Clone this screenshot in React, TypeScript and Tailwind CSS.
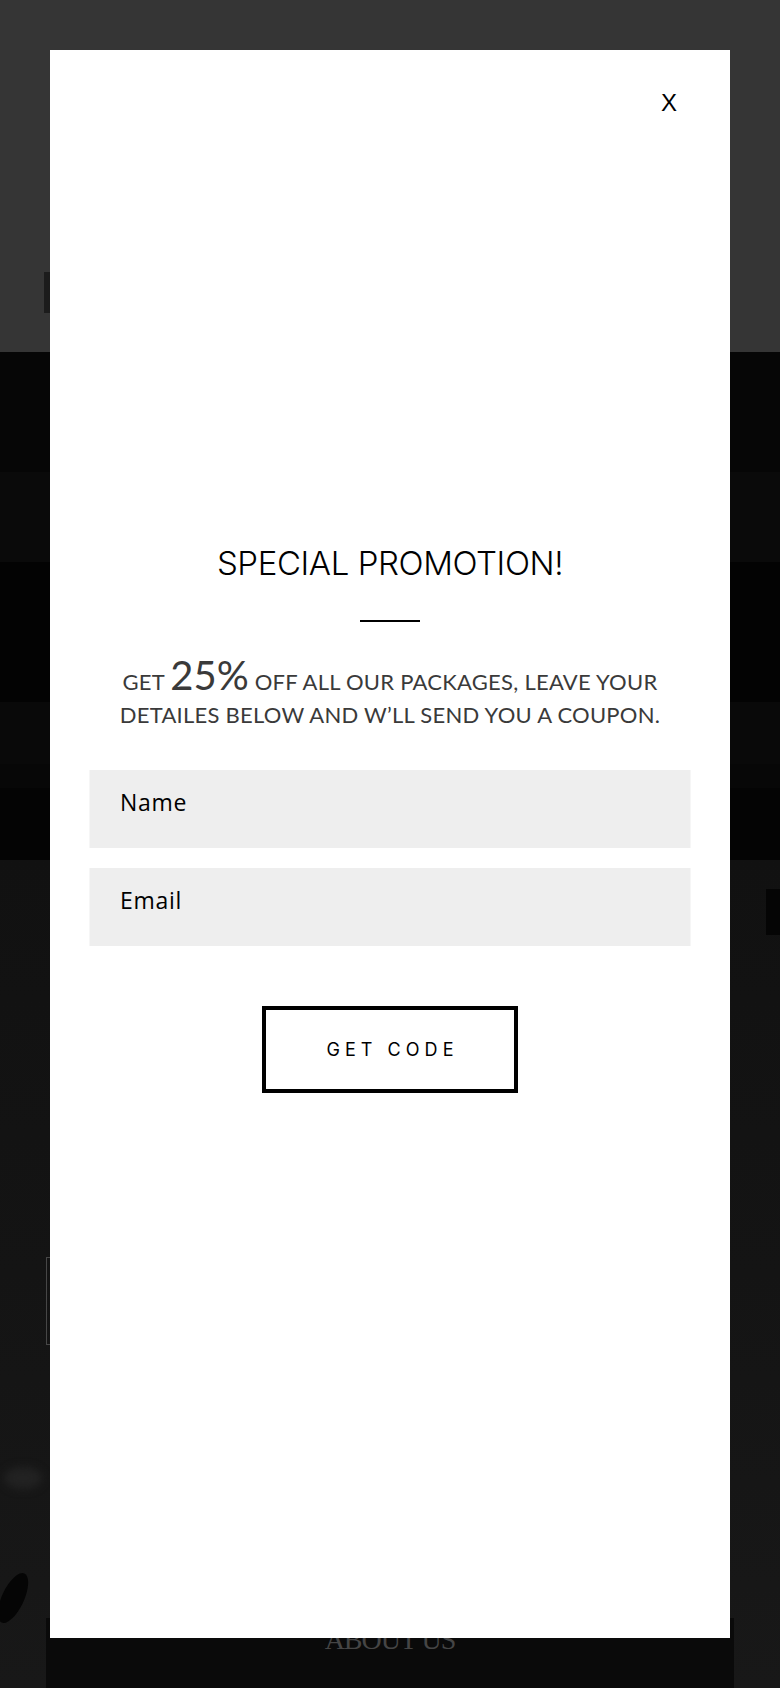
import React from "react";

const Backdrop = () => (
  <div className="flex flex-col w-[780px] h-[1688px] overflow-hidden">
    {/* header */}
    <div className="shrink-0 h-[352px] bg-[#353535] pt-[272px] pl-[44px]">
      <div className="w-[40px] h-[41px] bg-[#1c1c1c]" />
    </div>
    {/* hero image, dimmed */}
    <div className="shrink-0 h-[508px] flex flex-col bg-[#050505]">
      <div className="h-[120px] bg-[#060606]" />
      <div className="h-[90px] bg-[#0a0a0a]" />
      <div className="h-[140px] bg-[#030303]" />
      <div className="h-[62px] bg-[#090909]" />
      <div className="h-[24px] bg-[#070707]" />
      <div className="flex-1 bg-[#040404]" />
    </div>
    {/* lower section */}
    <div className="flex-1 flex flex-col bg-gradient-to-b from-[#111111] via-[#141414] to-[#181818]">
      <div className="h-[29px]" />
      <div className="flex justify-end">
        <div className="w-[14px] h-[46px] bg-[#050505]" />
      </div>
      <div className="h-[322px]" />
      <div className="pl-[46px]">
        <div className="w-[20px] h-[88px] border border-[#474747]" />
      </div>
      <div className="h-[122px]" />
      <div className="pl-[4px]">
        <div className="w-[38px] h-[22px] rounded-[50%] bg-[#222222] blur-[4px]" />
      </div>
      <div className="h-[82px]" />
      <div className="h-[40px] pl-[2px]">
        <div className="w-[22px] h-[54px] rounded-[50%] bg-[#050505] rotate-[25deg]" />
      </div>
      <div className="flex-1" />
      <div className="shrink-0 mx-[46px] h-[70px] bg-[#0a0a0a] flex justify-center pt-[8px]">
        <span
          className="text-[28px] leading-none text-[#454545] tracking-[-1px]"
          style={{ fontFamily: '"Liberation Serif", serif' }}
        >
          ABOUT US
        </span>
      </div>
    </div>
  </div>
);

const inputFont = { fontFamily: '"Open Sans", Lato, sans-serif' };

const PromoModal = () => (
  <div className="fixed left-[50px] top-[50px] w-[680px] h-[1588px] bg-white flex flex-col items-center">
    <button
      className="absolute right-[53px] top-[41px] text-[24px] leading-none text-black"
      style={{ fontFamily: '"Liberation Sans", Arial, sans-serif' }}
    >
      X
    </button>
    <h2
      className="mt-[497px] text-[33px] leading-none font-light text-black tracking-[-0.4px]"
      style={{ fontFamily: 'Inter, "Liberation Sans", sans-serif' }}
    >
      SPECIAL PROMOTION!
    </h2>
    <div className="mt-[40px] w-[60px] h-[2px] bg-black" />
    <p
      className="mt-[43px] text-[22px] leading-[33px] tracking-[0.25px] text-center text-[#3a3a3a]"
      style={{ fontFamily: 'Lato, "Open Sans", sans-serif' }}
    >
      GET <span className="text-[40px] leading-[20px] tracking-normal">25%</span> OFF ALL OUR PACKAGES, LEAVE YOUR
      <br />
      DETAILES BELOW AND W’LL SEND YOU A COUPON.
    </p>
    <div className="mt-[39px] flex flex-col gap-[20px] w-[601px] -translate-x-[0.5px]">
      <input
        placeholder="Name"
        className="w-full h-[78px] bg-[#eeeeee] pl-[31px] pb-[14px] text-[23px] tracking-[0.7px] text-black placeholder:text-black outline-none"
        style={inputFont}
      />
      <input
        placeholder="Email"
        className="w-full h-[78px] bg-[#eeeeee] pl-[31px] pb-[14px] text-[23px] tracking-[0.7px] text-black placeholder:text-black outline-none"
        style={inputFont}
      />
    </div>
    <button
      className="mt-[60px] w-[256px] h-[87px] border-[4px] border-black text-[18px] text-black tracking-[0.28em] pl-[0.28em]"
      style={{ fontFamily: 'Inter, "Liberation Sans", sans-serif' }}
    >
      GET CODE
    </button>
  </div>
);

export default function App() {
  return (
    <div className="relative w-[780px] h-[1688px] overflow-hidden">
      <Backdrop />
      <PromoModal />
    </div>
  );
}
